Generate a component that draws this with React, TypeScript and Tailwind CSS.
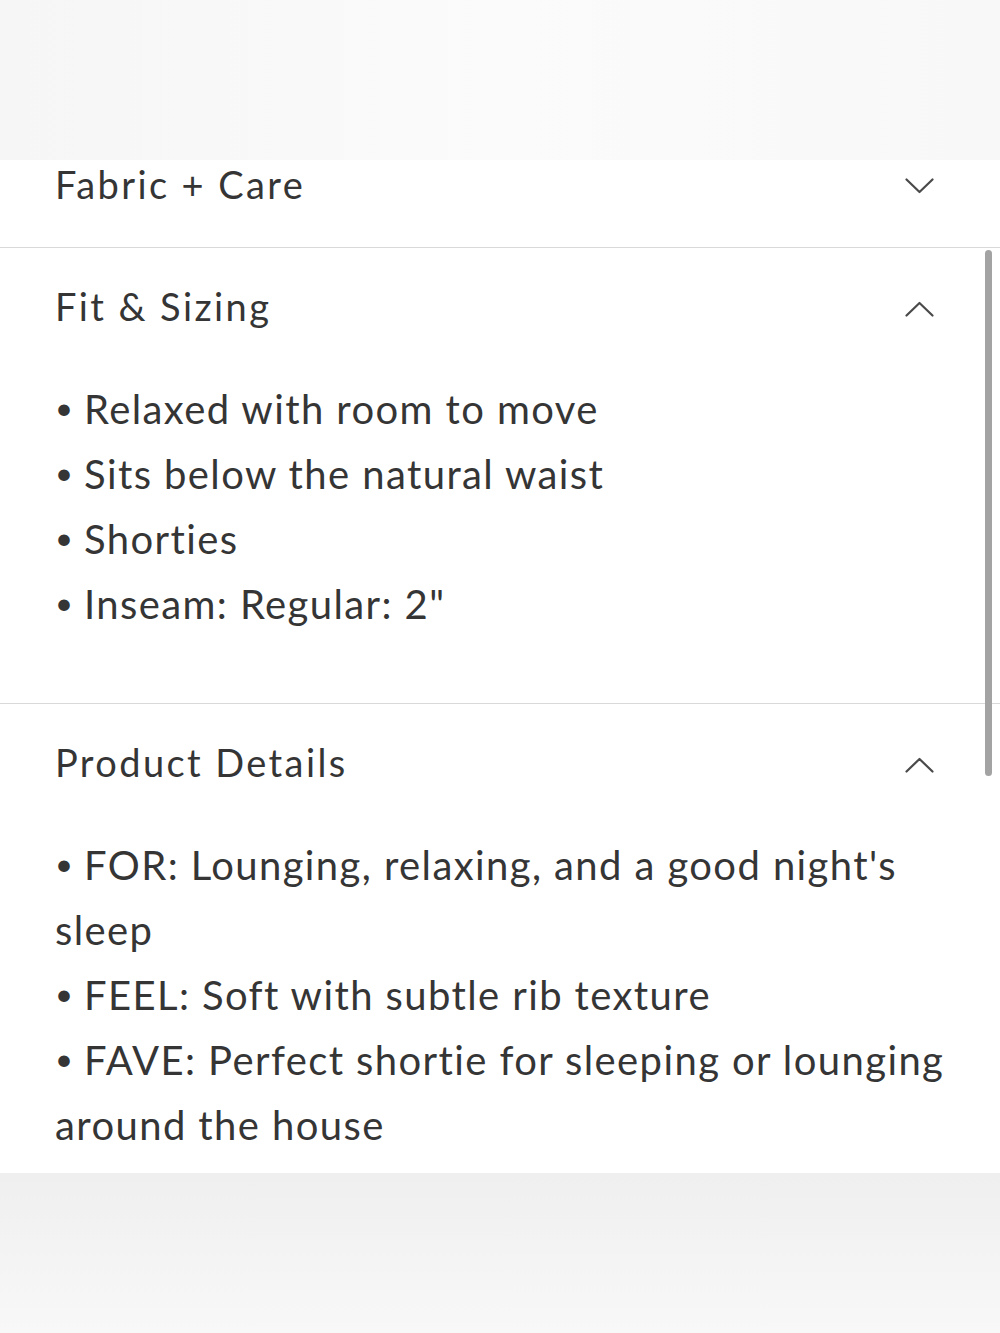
import { useState } from 'react'

type Section = {
  id: string
  title: string
  items: string[]
}

const sections: Section[] = [
  { id: 'fabric', title: 'Fabric + Care', items: [] },
  {
    id: 'fit',
    title: 'Fit & Sizing',
    items: ['Relaxed with room to move', 'Sits below the natural waist', 'Shorties', 'Inseam: Regular: 2"'],
  },
  {
    id: 'details',
    title: 'Product Details',
    items: [
      "FOR: Lounging, relaxing, and a good night's sleep",
      'FEEL: Soft with subtle rib texture',
      'FAVE: Perfect shortie for sleeping or lounging around the house',
    ],
  },
]

function Chevron({ up }: { up: boolean }) {
  return (
    <svg width="29" height="16" viewBox="0 0 29 16" fill="none" aria-hidden="true">
      <path
        d={up ? 'M1.5 14.5 L14.5 2 L27.5 14.5' : 'M1.5 1.5 L14.5 14 L27.5 1.5'}
        stroke="#4a4a4a"
        strokeWidth="2.2"
        strokeLinecap="round"
        strokeLinejoin="round"
      />
    </svg>
  )
}

export default function App() {
  const [open, setOpen] = useState<Record<string, boolean>>({ fabric: false, fit: true, details: true })

  return (
    <div className="w-[1000px] h-[1333px] flex flex-col bg-white text-[#353535] font-['Lato','Noto_Sans',sans-serif]">
      {/* top fade band */}
      <div className="h-[160px] shrink-0 bg-gradient-to-r from-[#f6f6f6] via-[#fbfbfb] to-[#f8f8f8]" />

      <div className="relative flex-1 bg-white">
        {sections.map((s, i) => {
          const isOpen = open[s.id]
          return (
            <div key={s.id} className={i > 0 ? 'border-t border-[#d9d9d9]' : ''}>
              <button
                onClick={() => setOpen((o) => ({ ...o, [s.id]: !o[s.id] }))}
                className={`w-full flex items-center justify-between pl-[55px] pr-[66px] text-left ${
                  i === 0 ? 'h-[87px] pb-[35px]' : 'h-[122px]'
                }`}
              >
                <span className={`text-[38px] leading-none tracking-[2.4px] ${i === 0 ? '-mt-[4px]' : '-mt-[6px]'}`}>
                  {s.title}
                </span>
                <Chevron up={isOpen} />
              </button>
              {isOpen && s.items.length > 0 && (
                <ul
                  className={`pl-[55px] pr-[40px] pt-[7px] text-[40px] leading-[65px] tracking-[1.4px] ${
                    i === sections.length - 1 ? 'pb-[15px]' : 'pb-[66px]'
                  }`}
                >
                  {s.items.map((item) => (
                    <li key={item}>
                      <span className="relative -top-[5px] inline-block w-[29px] text-[31px] leading-none tracking-normal">
                        •
                      </span>
                      {item}
                    </li>
                  ))}
                </ul>
              )}
            </div>
          )
        })}

        {/* scroll indicator */}
        <div className="absolute left-[985px] top-[90px] w-[7px] h-[526px] rounded-full bg-[#a3a3a3]" />
      </div>

      {/* bottom fade band */}
      <div className="h-[161px] shrink-0 bg-gradient-to-b from-[#efefef] to-[#f8f8f8]" />
    </div>
  )
}
